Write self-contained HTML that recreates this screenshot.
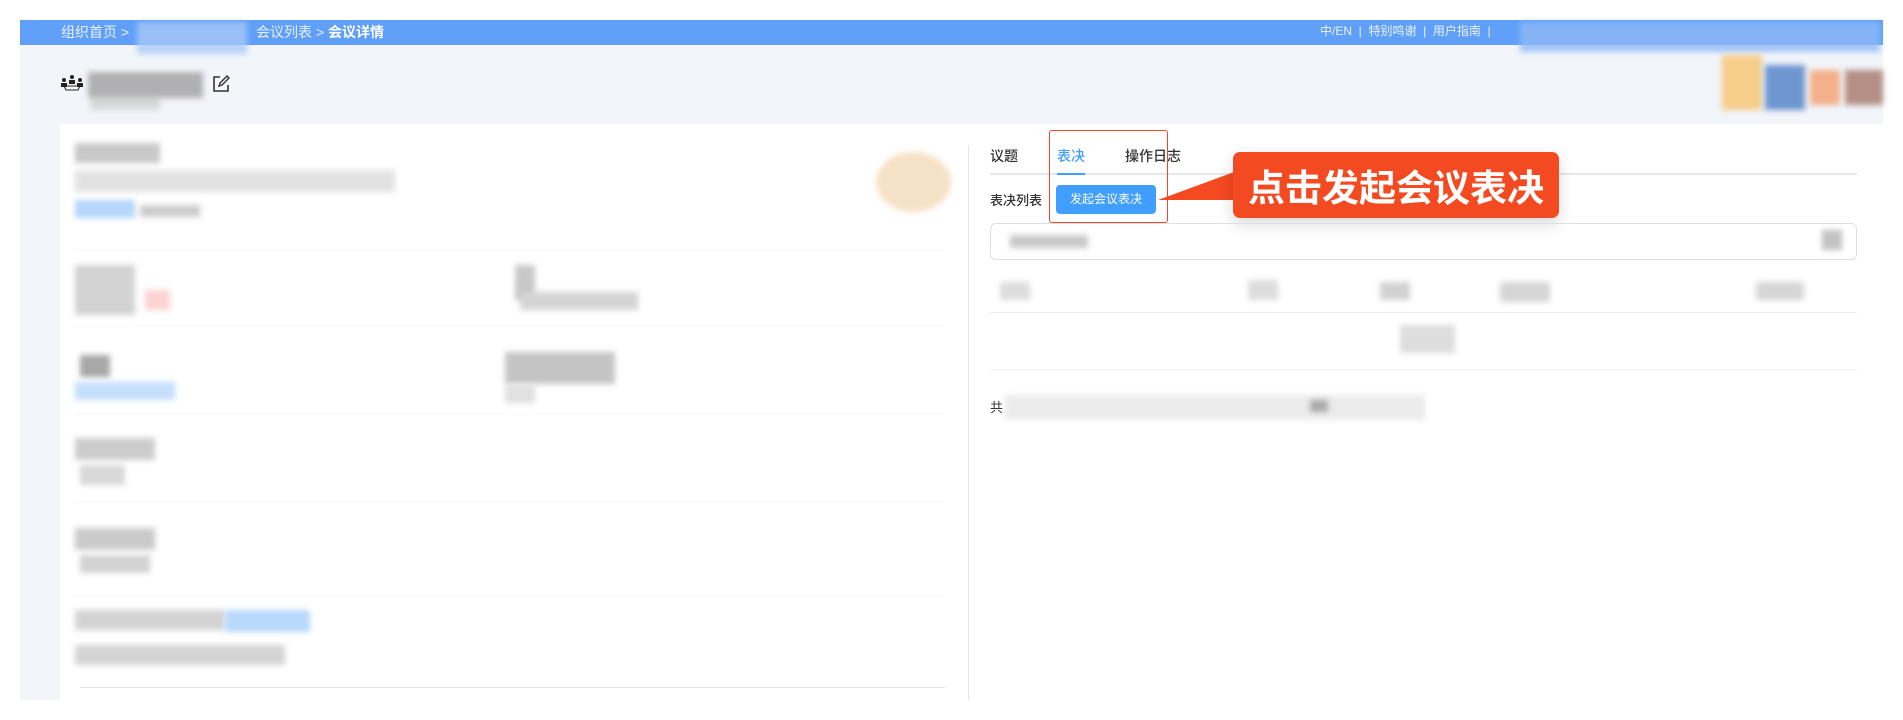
<!DOCTYPE html>
<html><head><meta charset="utf-8"><style>
*{margin:0;padding:0;box-sizing:border-box}
body{width:1903px;height:720px;background:#fff;position:relative;overflow:hidden;font-family:"Liberation Sans","Noto Sans CJK SC",sans-serif}
.a{position:absolute}
.bl{position:absolute;filter:blur(3px)}
.t{position:absolute;white-space:nowrap}
.sep{position:absolute;height:2px;background:#fafafa}
</style></head><body>
<div class="a" style="left:20px;top:20px;width:1863px;height:680px;background:#f2f5fa"></div>
<div class="a" style="left:20px;top:20px;width:1863px;height:25px;background:#5f9ff8"></div>
<div class="t" style="left:61px;top:22px;font-size:14px;color:#e8f0ff">组织首页 &gt;</div>
<div class="bl" style="left:137px;top:22px;width:110px;height:32px;background:#a9c9f8;opacity:.8"></div>
<div class="t" style="left:256px;top:22px;font-size:14px;color:#e8f0ff">会议列表 &gt; <b style="color:#fff">会议详情</b></div>
<div class="t" style="left:1320px;top:22px;font-size:12px;color:#eaf2ff">中/EN &nbsp;| &nbsp;特别鸣谢 &nbsp;| &nbsp;用户指南 &nbsp;| &nbsp;</div>
<div class="bl" style="left:1520px;top:22px;width:360px;height:30px;background:#8fb9f6;opacity:.8"></div>
<svg class="a" style="left:60px;top:73px" width="24" height="20" viewBox="0 0 24 20"><circle cx="4" cy="7" r="2" fill="#222"/><circle cx="12" cy="4" r="2" fill="#222"/><circle cx="20" cy="7" r="2" fill="#222"/><path d="M1 14v-4h6v4M9 11V7h6v4M17 14v-4h6v4" fill="#222"/><path d="M4 13h16l-2 4H6z" fill="none" stroke="#222"/></svg>
<div class="bl" style="left:88px;top:72px;width:115px;height:26px;background:#9a9a9a;opacity:.75"></div>
<div class="bl" style="left:90px;top:96px;width:70px;height:14px;background:#bbb;opacity:.5"></div>
<svg class="a" style="left:212px;top:75px" width="18" height="18" viewBox="0 0 18 18"><path d="M8 2H2v14h14v-6" fill="none" stroke="#333" stroke-width="1.6"/><path d="M7 11l1-3 7-7 2 2-7 7z" fill="none" stroke="#333" stroke-width="1.4"/></svg>
<div class="bl" style="left:1722px;top:55px;width:40px;height:55px;background:#f6cd8a"></div>
<div class="bl" style="left:1765px;top:65px;width:40px;height:45px;background:#6d95d0"></div>
<div class="bl" style="left:1810px;top:70px;width:30px;height:35px;background:#f3b08a"></div>
<div class="bl" style="left:1845px;top:70px;width:38px;height:35px;background:#b38f86"></div>
<div class="a" style="left:60px;top:124px;width:1823px;height:576px;background:#fff"></div>
<div class="bl" style="left:75px;top:143px;width:85px;height:20px;background:#c8c8c8"></div>
<div class="bl" style="left:75px;top:170px;width:320px;height:22px;background:#dcdcdc;opacity:.8"></div>
<div class="bl" style="left:75px;top:200px;width:60px;height:18px;background:#b6d6fb"></div>
<div class="bl" style="left:140px;top:205px;width:60px;height:12px;background:#aaa;opacity:.6"></div>
<div class="bl" style="left:876px;top:152px;width:75px;height:60px;border-radius:50%;background:#f6e2c6"></div>
<div class="sep" style="left:75px;top:249px;width:870px"></div>
<div class="bl" style="left:75px;top:265px;width:60px;height:50px;background:#d2d2d2"></div>
<div class="bl" style="left:145px;top:290px;width:25px;height:20px;background:#fbd3d3"></div>
<div class="bl" style="left:515px;top:265px;width:20px;height:35px;background:#c8c8c8"></div>
<div class="bl" style="left:520px;top:292px;width:118px;height:18px;background:#d4d4d4"></div>
<div class="sep" style="left:75px;top:325px;width:870px"></div>
<div class="bl" style="left:80px;top:355px;width:30px;height:22px;background:#a8a8a8"></div>
<div class="bl" style="left:75px;top:382px;width:100px;height:18px;background:#c4defc"></div>
<div class="bl" style="left:505px;top:352px;width:110px;height:32px;background:#c4c4c4"></div>
<div class="bl" style="left:505px;top:385px;width:30px;height:18px;background:#e0e0e0"></div>
<div class="sep" style="left:75px;top:413px;width:870px"></div>
<div class="bl" style="left:75px;top:438px;width:80px;height:22px;background:#cccccc"></div>
<div class="bl" style="left:80px;top:465px;width:45px;height:20px;background:#d8d8d8"></div>
<div class="sep" style="left:75px;top:501px;width:870px"></div>
<div class="bl" style="left:75px;top:528px;width:80px;height:22px;background:#cacaca"></div>
<div class="bl" style="left:80px;top:555px;width:70px;height:18px;background:#d2d2d2"></div>
<div class="sep" style="left:75px;top:595px;width:870px"></div>
<div class="bl" style="left:75px;top:610px;width:150px;height:20px;background:#c8c8c8;opacity:.8"></div>
<div class="bl" style="left:225px;top:610px;width:85px;height:22px;background:#b8d8fc"></div>
<div class="bl" style="left:75px;top:645px;width:210px;height:20px;background:#d4d4d4"></div>
<div class="a" style="left:80px;top:687px;width:865px;height:1px;background:#e4e4e4"></div>
<div class="a" style="left:968px;top:145px;width:1px;height:555px;background:#e6e6e6"></div>
<div class="t" style="left:990px;top:146px;font-size:14px;color:#333;font-weight:500">议题</div>
<div class="t" style="left:1057px;top:146px;font-size:14px;color:#409eff;font-weight:500">表决</div>
<div class="t" style="left:1125px;top:146px;font-size:14px;color:#333;font-weight:500">操作日志</div>
<div class="a" style="left:990px;top:173px;width:867px;height:2px;background:#e4e7ed"></div>
<div class="a" style="left:1057px;top:173px;width:28px;height:2px;background:#409eff"></div>
<div class="t" style="left:990px;top:190px;font-size:13px;color:#333;font-weight:500">表决列表</div>
<div class="a" style="left:1056px;top:185px;width:100px;height:29px;background:#409eff;border-radius:4px;color:#fff;font-size:12px;text-align:center;line-height:29px">发起会议表决</div>
<div class="a" style="left:1049px;top:130px;width:119px;height:93px;border:1.5px solid #f0482a;border-radius:3px"></div>
<svg class="a" style="left:1150px;top:160px" width="100" height="50"><polygon points="8,40 95,8 95,40" fill="#f44a22"/></svg>
<div class="a" style="left:1233px;top:152px;width:326px;height:66px;background:#f44a22;border-radius:7px;box-shadow:0 6px 16px rgba(0,0,0,.15);color:#fff;font-weight:bold;font-size:37px;line-height:66px;text-align:center;font-family:'Noto Sans CJK SC',sans-serif">点击发起会议表决</div>
<div class="a" style="left:990px;top:223px;width:867px;height:37px;border:1px solid #dcdfe6;border-radius:6px"></div>
<div class="bl" style="left:1010px;top:235px;width:78px;height:13px;background:#bbb;opacity:.8"></div>
<div class="bl" style="left:1822px;top:230px;width:20px;height:20px;background:#c2c2c2"></div>
<div class="bl" style="left:1000px;top:282px;width:30px;height:18px;background:#ddd"></div>
<div class="bl" style="left:1248px;top:280px;width:30px;height:20px;background:#ddd"></div>
<div class="bl" style="left:1380px;top:282px;width:30px;height:18px;background:#d2d2d2"></div>
<div class="bl" style="left:1500px;top:282px;width:50px;height:20px;background:#d6d6d6"></div>
<div class="bl" style="left:1756px;top:282px;width:48px;height:18px;background:#d6d6d6"></div>
<div class="a" style="left:990px;top:312px;width:867px;height:1px;background:#eee"></div>
<div class="bl" style="left:1400px;top:325px;width:55px;height:28px;background:#ddd"></div>
<div class="a" style="left:990px;top:369px;width:867px;height:1px;background:#eee"></div>
<div class="t" style="left:990px;top:397px;font-size:13px;color:#333">共</div>
<div class="bl" style="left:1005px;top:395px;width:420px;height:25px;background:#ececec"></div>
<div class="bl" style="left:1310px;top:400px;width:18px;height:12px;background:#aaa"></div>
</body></html>
